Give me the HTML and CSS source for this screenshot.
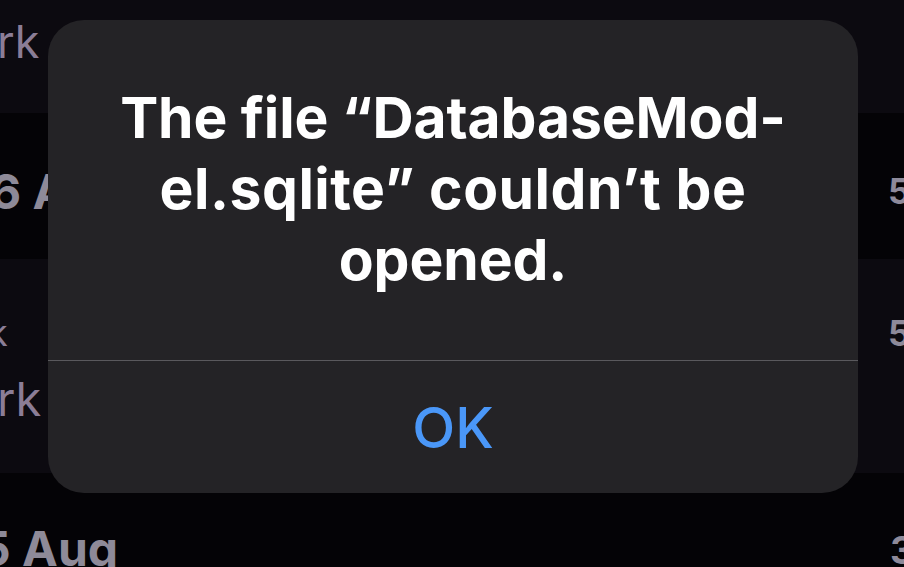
FILE: index.html
```html
<!DOCTYPE html>
<html lang="en">
<head>
<meta charset="utf-8">
<title>Alert</title>
<link rel="stylesheet" href="styles.css">
</head>
<body>
<div class="screen">
  <div class="list">
    <div class="row row-a">
      <span class="cell-text cell-title">rk</span>
    </div>
    <div class="row row-b">
      <span class="day day-first">6 Aug</span>
      <span class="count">5</span>
    </div>
    <div class="row row-c">
      <div class="cell-stack">
        <span class="cell-text cell-sub">k</span>
        <span class="cell-text cell-title cell-title-2">rk</span>
      </div>
      <span class="count count-c">5</span>
    </div>
    <div class="row row-d">
      <span class="day day-last">5 Aug</span>
      <span class="count count-d">3</span>
    </div>
  </div>

  <div class="alert" role="alertdialog">
    <div class="alert-body">
      <p class="alert-title">
        <span class="line">The file “DatabaseMod-</span>
        <span class="line line-2">el.sqlite” couldn’t be</span>
        <span class="line">opened.</span>
      </p>
    </div>
    <div class="alert-sep"></div>
    <div class="alert-actions">
      <button class="alert-btn" type="button">OK</button>
    </div>
  </div>
</div>
</body>
</html>
```

FILE: styles.css
```css
* { box-sizing: border-box; }

html, body {
  margin: 0;
  padding: 0;
  background: #040306;
}

body {
  font-family: Inter, "Noto Sans", "Liberation Sans", sans-serif;
}

.screen {
  position: relative;
  width: 904px;
  height: 567px;
  overflow: hidden;
  background: #040306;
}

.list {
  display: flex;
  flex-direction: column;
}

.row {
  display: flex;
  align-items: flex-start;
  overflow: hidden;
}

.row-a {
  height: 113px;
  background: #0c0a10;
  padding-top: 19px;
}

.row-b {
  height: 146px;
  background: #040306;
  padding-top: 55px;
}

.row-c {
  height: 214px;
  background: #0c0a10;
  padding-top: 45px;
}

.row-d {
  height: 94px;
  background: #040306;
  padding-top: 52px;
}

.cell-text {
  color: #8b7d96;
  font-weight: 400;
  white-space: nowrap;
}

.cell-title {
  font-size: 45px;
  line-height: 45px;
  margin-left: -3px;
}

.cell-stack {
  display: flex;
  flex-direction: column;
}

.cell-sub {
  font-size: 36px;
  line-height: 36px;
  margin-left: -12px;
  margin-top: 11px;
}

.cell-title-2 {
  font-size: 47px;
  line-height: 47px;
  margin-top: 24px;
}

.day {
  color: #8e8a98;
  font-size: 48px;
  line-height: 48px;
  font-weight: 700;
  white-space: nowrap;
}

.day-first { margin-left: -10px; }
.day-last { margin-left: -20px; }

.count {
  margin-left: auto;
  margin-right: -6px;
  width: 22px;
  color: #8e8a9a;
  font-size: 35px;
  line-height: 35px;
  font-weight: 700;
  margin-top: 6px;
}

.count-c { margin-top: 12px; }
.count-d { margin-top: 8px; margin-right: -8px; font-size: 38px; }

/* Alert overlay */
.alert {
  position: absolute;
  left: 48px;
  top: 20px;
  width: 810px;
  height: 473px;
  border-radius: 36px;
  background: #242326;
  display: flex;
  flex-direction: column;
  overflow: hidden;
}

.alert-body {
  height: 340px;
  padding-top: 62px;
}

.alert-title {
  margin: 0;
  color: #ffffff;
  font-weight: 700;
  font-size: 57px;
  line-height: 71px;
  text-align: center;
  letter-spacing: -0.1px;
}

.alert-title .line {
  display: block;
  white-space: nowrap;
}

.alert-title .line-2 {
  letter-spacing: 0.5px;
}

.alert-sep {
  height: 1px;
  background: #5a595d;
}

.alert-actions {
  flex: 1;
  display: flex;
  align-items: center;
  justify-content: center;
}

.alert-btn {
  border: 0;
  background: none;
  padding: 0;
  margin-top: 2px;
  font-family: Inter, "Noto Sans", "Liberation Sans", sans-serif;
  font-size: 56px;
  line-height: 68px;
  font-weight: 500;
  color: #4a97f8;
}
```
